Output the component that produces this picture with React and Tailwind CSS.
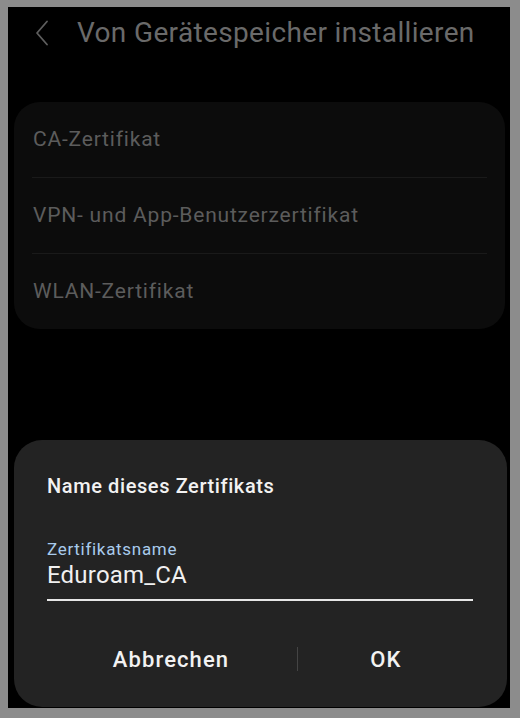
export default function App() {
  const items = ["CA-Zertifikat", "VPN- und App-Benutzerzertifikat", "WLAN-Zertifikat"];

  return (
    <div className="w-[520px] h-[718px] bg-[#8c8c8c] pt-[7px] pl-[8px] pr-[10px] pb-[10px] font-['Roboto',sans-serif]">
      <div className="h-full bg-black flex flex-col">
        {/* header */}
        <div className="h-[52px] flex items-center pl-[27px]">
          <svg width="14" height="26" viewBox="0 0 14 26" fill="none" className="shrink-0">
            <path d="M12 1.5 L2 13 L12 24.5" stroke="#5e5e5e" strokeWidth="1.8" strokeLinecap="round" strokeLinejoin="round" />
          </svg>
          <h1 className="ml-[28px] text-[28px] leading-[32px] text-[#6a6a6a] tracking-[0.35px]">Von Gerätespeicher installieren</h1>
        </div>

        {/* list card */}
        <div className="mt-[43px] ml-[6px] mr-[5px] rounded-[26px] bg-[#0c0c0c] px-[18px]">
          {items.map((t, i) => (
            <div key={t}>
              {i > 0 && <div className="h-px bg-[#1a1a1a]" />}
              <div className="h-[75px] flex items-center pl-px text-[21px] tracking-[0.8px] text-[#5c5c5c]">{t}</div>
            </div>
          ))}
        </div>

        <div className="flex-1" />

        {/* dialog */}
        <div className="ml-[6px] mr-[3px] mb-[1px] h-[267px] rounded-[28px] bg-[#232323] px-[33px] pt-[34px] flex flex-col">
          <div className="text-[20px] leading-[24px] font-medium tracking-[0.6px] text-[#f2f2f2]">Name dieses Zertifikats</div>
          <div className="mt-[41px] text-[17px] leading-[20px] tracking-[0.7px] text-[#a9cbec]">Zertifikatsname</div>
          <div className="mt-[2px] text-[24px] leading-[28px] tracking-[0.2px] text-[#f0f0f0]">Eduroam_CA</div>
          <div className="mt-[10px] h-[2px] bg-[#e6e6e6] mr-[1px]" />
          <div className="mt-[30px] h-[56px] flex items-center -ml-[2px]">
            <button className="w-[252px] text-center text-[22px] font-medium tracking-[1.1px] text-[#f2f2f2]">Abbrechen</button>
            <div className="w-px h-[24px] bg-[#444444]" />
            <button className="flex-1 text-center text-[22px] font-medium tracking-[1.1px] text-[#f2f2f2]">OK</button>
          </div>
        </div>
      </div>
    </div>
  );
}
